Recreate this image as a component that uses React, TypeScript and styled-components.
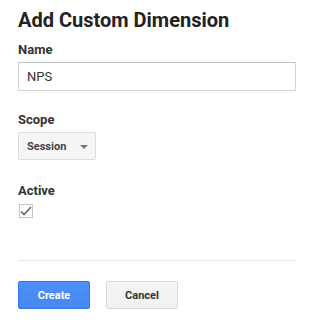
import React from "react";
import styled, { createGlobalStyle } from "styled-components";

const Global = createGlobalStyle`
  html, body { margin: 0; padding: 0; background: #fff; }
  body { font-family: Roboto, "Liberation Sans", Arial, sans-serif; color: #222; }
  * { box-sizing: border-box; }
`;

const Page = styled.div`
  width: 310px;
  padding: 8px 14px 0 18px;
`;

const Title = styled.h1`
  margin: 0;
  font-size: 20px;
  line-height: 24px;
  font-weight: 700;
  color: #222;
`;

const Field = styled.div<{ $top: number; $gap?: number }>`
  margin-top: ${(p) => p.$top}px;
  display: flex;
  flex-direction: column;
  gap: ${(p) => p.$gap ?? 4}px;
`;

const Label = styled.label`
  font-size: 13px;
  line-height: 16px;
  font-weight: 700;
  color: #333;
`;

const Input = styled.div`
  width: 278px;
  height: 29px;
  border: 1px solid #d4d4d4;
  border-top-color: #c0c0c0;
  padding: 0 8px;
  display: flex;
  align-items: center;
  font-size: 13px;
  color: #333;
`;

const Select = styled.div`
  width: 78px;
  height: 28px;
  border: 1px solid #dcdcdc;
  border-radius: 2px;
  background: #f5f5f5;
  display: flex;
  align-items: center;
  padding: 0 8px;
  font-size: 11px;
  font-weight: 700;
  color: #444;
  gap: 14px;
`;

const Caret = styled.span`
  width: 0;
  height: 0;
  border-left: 4px solid transparent;
  border-right: 4px solid transparent;
  border-top: 4px solid #777;
  margin-top: 2px;
`;

const Check = styled.div`
  width: 14px;
  height: 14px;
  margin-left: 1px;
  border: 1px solid #c6c6c6;
  display: flex;
  align-items: center;
  justify-content: center;
`;

const Divider = styled.hr`
  margin: 42px 0 0;
  width: 278px;
  border: 0;
  border-top: 1px solid #e5e5e5;
`;

const Buttons = styled.div`
  display: flex;
  gap: 16px;
  margin-top: 20px;
`;

const Button = styled.button<{ $primary?: boolean }>`
  width: 72px;
  height: 28px;
  border-radius: 2px;
  font-family: inherit;
  font-size: 11px;
  font-weight: 700;
  padding: 0;
  cursor: pointer;
  border: 1px solid ${(p) => (p.$primary ? "#3079ed" : "#d9d9d9")};
  background: ${(p) =>
    p.$primary ? "linear-gradient(#4d90fe, #4787ed)" : "linear-gradient(#f5f5f5, #f1f1f1)"};
  color: ${(p) => (p.$primary ? "#fff" : "#333")};
`;

export default function App() {
  return (
    <Page>
      <Global />
      <Title>Add Custom Dimension</Title>
      <Field $top={10}>
        <Label>Name</Label>
        <Input>NPS</Input>
      </Field>
      <Field $top={21}>
        <Label>Scope</Label>
        <Select>
          <span>Session</span>
          <Caret />
        </Select>
      </Field>
      <Field $top={23} $gap={5}>
        <Label>Active</Label>
        <Check>
          <svg width="12" height="10" viewBox="0 0 12 10">
            <path d="M1 5.5 L4 8.5 L11 1" fill="none" stroke="#666" strokeWidth="1.6" />
          </svg>
        </Check>
      </Field>
      <Divider />
      <Buttons>
        <Button $primary>Create</Button>
        <Button>Cancel</Button>
      </Buttons>
    </Page>
  );
}
